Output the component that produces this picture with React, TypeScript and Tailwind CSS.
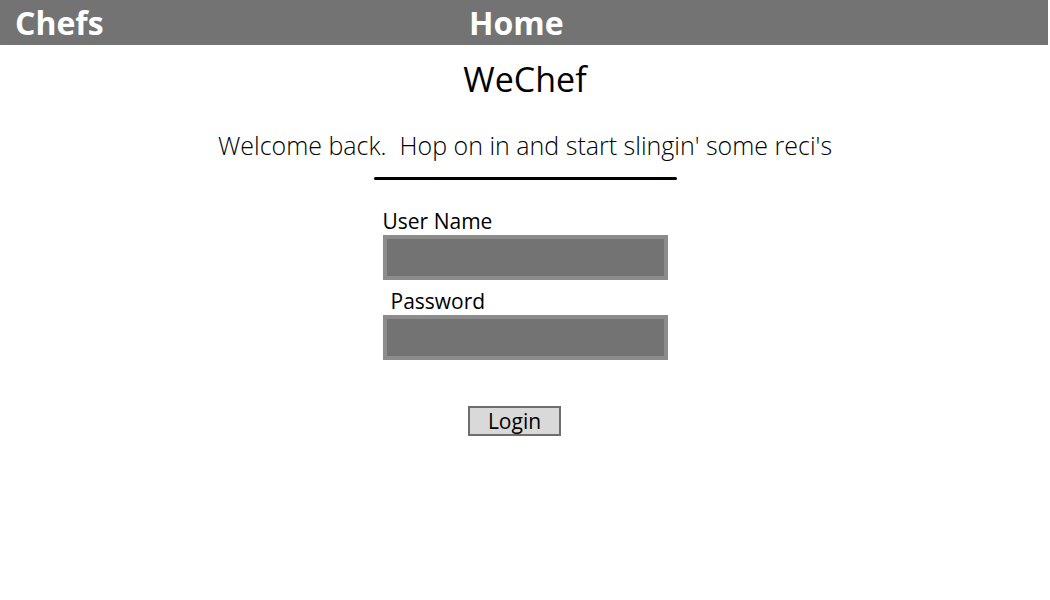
import React from "react";

export default function App() {
  return (
    <div className="w-[1050px] h-[600px] bg-white overflow-hidden" style={{ fontFamily: '"Open Sans", sans-serif' }}>
      <div className="h-[45px] w-[1048px] bg-[#737373] flex items-center relative">
        <span className="ml-[15px] text-white font-bold text-[32px] leading-none">Chefs</span>
        <span className="absolute left-[469px] text-white font-bold text-[32px] leading-none">Home</span>
      </div>
      <div className="flex flex-col items-center">
        <h1 className="mt-[14px] text-[34px] leading-[40px] text-black">WeChef</h1>
        <p className="mt-[29px] text-[25px] leading-[34px] font-light text-black">Welcome back.&nbsp; Hop on in and start slingin' some reci's</p>
        <div className="mt-[15px] w-[303px] h-[3px] rounded-full bg-black" />
        <div className="mt-[28px] w-[285px] flex flex-col">
          <label className="text-[21px] leading-[27px] text-black">User Name</label>
          <div className="h-[45px] w-[285px] bg-[#737373] border-[4px] border-[#8c8c8c]" />
          <label className="mt-[8px] ml-[8px] text-[21px] leading-[27px] text-black">Password</label>
          <div className="h-[45px] w-[285px] bg-[#737373] border-[4px] border-[#8c8c8c]" />
        </div>
        <button className="mt-[46px] mr-[21px] w-[93px] h-[30px] bg-[#d9d9d9] border-2 border-[#6e6e6e] text-[21px] leading-none text-black">Login</button>
      </div>
    </div>
  );
}
